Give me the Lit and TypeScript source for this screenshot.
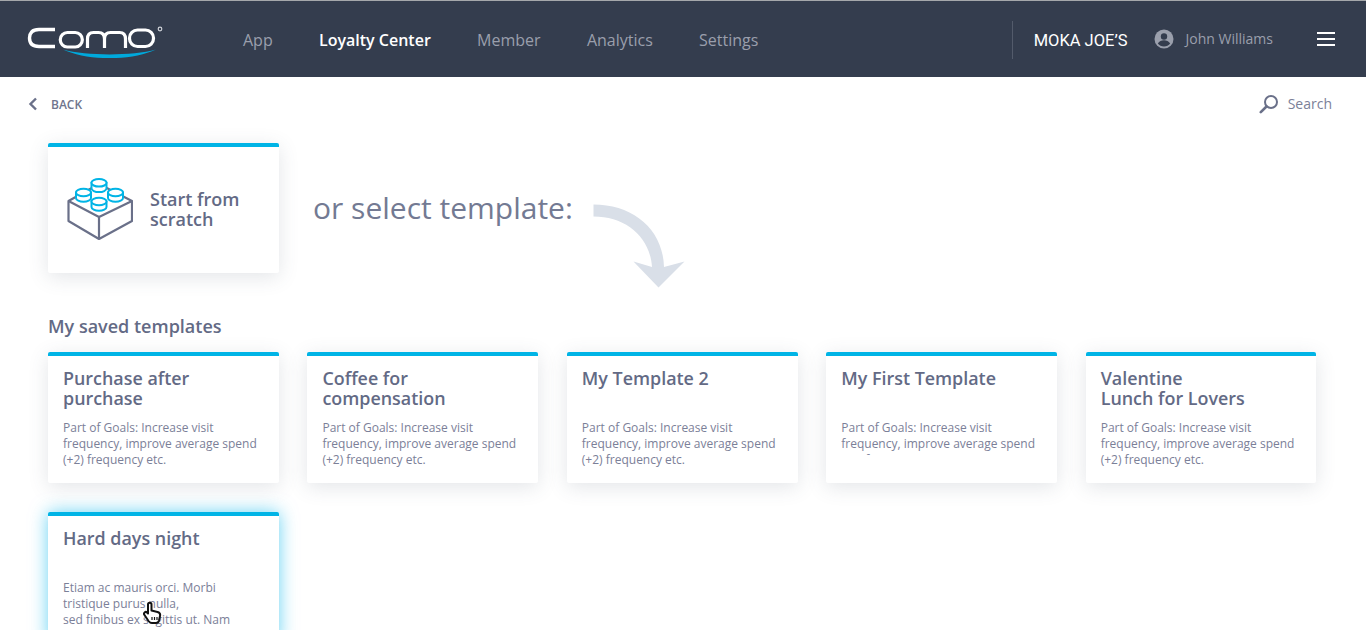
import { LitElement, html, css, svg } from "lit";
import { customElement } from "lit/decorators.js";

const saved = [
  { t: "Purchase after purchase", d: "Part of Goals: Increase visit frequency, improve average spend (+2) frequency etc." },
  { t: "Coffee for compensation", d: "Part of Goals: Increase visit frequency, improve average spend (+2) frequency etc." },
  { t: "My Template 2", d: "Part of Goals: Increase visit frequency, improve average spend (+2) frequency etc." },
  { t: "My First Template", d: "Part of Goals: Increase visit frequency, improve average spend (+2) frequency etc.", clip: true },
  { t: html`Valentine<br />Lunch for Lovers`, d: "Part of Goals: Increase visit frequency, improve average spend (+2) frequency etc." },
];

const stud = (x: number, y: number) => svg`
  <path d="M${x - 7.5} ${y}v5.500c0 2.200 3.500 3.800 7.500 3.800s7.500-1.600 7.500-3.800v-5.500z" fill="#fff" />
  <ellipse cx=${x} cy=${y} rx="7.500" ry="3.800" fill="#fff" />`;

@customElement("app-root")
export class AppRoot extends LitElement {
  static styles = css`
    :host { display: block; height: 630px; overflow: hidden; background: #fff; font-family: "Open Sans", sans-serif; color: #636a85; }
    .bar { height: 76px; border-top: 1px solid #a5a8ab; background: #343d4e; display: flex; align-items: center; }
    .logo { margin-left: 27px; width: 138px; height: 38px; flex: none; }
    nav { display: flex; gap: 46.3px; margin-left: 78px; font-size: 16px; color: #9a9fac; position: relative; top: 1px; }
    nav .on { color: #fff; font-weight: 600; }
    .right { margin-left: auto; display: flex; align-items: center; height: 38px; }
    .sep { width: 1px; height: 38px; background: #535b6b; margin-right: 21px; position: relative; top: 1px; }
    .org { font: 16.5px Roboto, sans-serif; color: #fff; margin-right: 26px; position: relative; top: 1px; }
    .avatar { width: 20px; height: 20px; margin-right: 12px; margin-top: -1px; }
    .user { font-size: 14px; color: #9a9fac; margin-right: 44px; margin-top: -1px; }
    .burger { width: 18px; height: 14px; margin-right: 31px; display: flex; flex-direction: column; justify-content: space-between; }
    .burger i { display: block; height: 2.4px; background: #fff; }
    .sub { height: 54px; display: flex; align-items: center; justify-content: space-between; padding: 0 34px 0 28px; }
    .back { display: flex; align-items: center; gap: 13px; font-size: 12px; font-weight: 600; color: #6f758d; }
    .search { display: flex; align-items: center; gap: 9px; font-size: 14px; line-height: 18px; color: #7b8098; }
    main { padding: 12px 49.5px 0 48px; }
    .top { display: flex; height: 130px; }
    .card { background: #fff; border-top: 4px solid #00b4e6; border-radius: 2px; box-shadow: 0 4px 20px rgba(70, 80, 100, .15); box-sizing: border-box; }
    .scratch { width: 231px; display: flex; align-items: center; gap: 17px; padding: 0 0 2px 19px; }
    .scratch svg { flex: none; }
    .scratch b { font-size: 18px; line-height: 20px; font-weight: 600; width: 95px; }
    .or { font-size: 30px; margin: 43px 0 0 34px; color: #737a93; line-height: 44px; white-space: nowrap; }
    .arrow { width: 92px; height: 84px; margin: 60.5px 0 0 20px; flex: none; }
    h2 { font-size: 18px; font-weight: 600; line-height: 24px; margin: 41px 0 14px; }
    .grid { display: grid; grid-template-columns: repeat(5, 1fr); column-gap: 28.6px; row-gap: 29px; }
    .tpl { height: 131px; padding: 12px 15px 0; position: relative; }
    .tpl h3 { margin: 0; font-size: 17.9px; line-height: 20px; font-weight: 600; height: 52px; }
    .tpl p { margin: 0; font-size: 12px; line-height: 16.2px; color: #7b8098; }
    .tpl p.clip { height: 35px; overflow: hidden; }
    .glow { box-shadow: 0 0 18px rgba(0, 180, 235, .6); }
    .hand { position: absolute; left: 95px; top: 85px; width: 20px; height: 24px; }
  `;

  render() {
    return html`
      <header class="bar">
        <svg class="logo" viewBox="0 0 138 38" fill="none" stroke="#fff" stroke-width="3.200" aria-label="Como logo">
          <path d="M28 9.500H12C5 9.500 2.500 13 2.500 18S5 26.500 12 26.500H28" stroke-width="3.400" />
          <rect x="33.300" y="12.500" width="22" height="14.500" rx="7" />
          <path d="M60.500 28V19c0-4 2-6.500 6-6.500h5c4 0 6 2.500 6 6.500v9M77.500 19c0-4 2-6.500 6-6.500h9c4 0 6 2.500 6 6.500v9" />
          <rect x="102.500" y="10" width="24" height="16.500" rx="8" />
          <path d="M36 29.500C60 36 105 36 129 29.500C105 41 60 41 36 29.500Z" fill="#00a9dc" stroke="none" />
          <circle cx="133" cy="9" r="1.800" stroke="#cfd2d8" stroke-width="1.200" />
        </svg>
        <nav>
          <span>App</span><span class="on">Loyalty Center</span><span>Member</span><span>Analytics</span><span>Settings</span>
        </nav>
        <div class="right">
          <div class="sep"></div>
          <span class="org">MOKA JOE’S</span>
          <svg class="avatar" viewBox="0 0 20 20">
            <circle cx="10" cy="10" r="9.500" fill="#9a9fac" />
            <circle cx="10" cy="7.500" r="3.200" fill="#343d4e" />
            <path d="M3.800 14.500c1.500-2.500 3.700-3.200 6.200-3.200s4.700.7 6.200 3.200c-1.500 2-3.700 3-6.200 3s-4.700-1-6.200-3z" fill="#343d4e" />
          </svg>
          <span class="user">John Williams</span>
          <div class="burger"><i></i><i></i><i></i></div>
        </div>
      </header>
      <div class="sub">
        <span class="back">
          <svg width="10" height="14" viewBox="0 0 10 14" fill="none" stroke="#6a7089" stroke-width="2.400"><path d="M8 1.500 2.500 7 8 12.500" /></svg>
          BACK
        </span>
        <span class="search">
          <svg width="20" height="20" viewBox="0 0 20 20" fill="none" stroke="#6a7089"><circle cx="12" cy="8" r="6" stroke-width="2" /><path d="M7.500 12.500 1.800 18.200" stroke-width="2.600" stroke-linecap="round" /></svg>
          <span>Search</span>
        </span>
      </div>
      <main>
        <div class="top">
          <div class="card scratch">
            <svg width="66" height="63" viewBox="0 0 66 63" fill="none">
              <g stroke="#6a7089" stroke-linejoin="round" stroke-width="2.200">
                <path d="M32 6 65 23V43L32 61 1.500 43V23Z" />
                <path d="M1.500 23 32 39 65 23M32 39V61" />
              </g>
              <g stroke="#00b4e6" stroke-width="2">
                ${stud(32, 4.8)}${stud(16.5, 14.5)}${stud(48.5, 14.5)}${stud(32, 23.5)}
              </g>
            </svg>
            <b>Start from scratch</b>
          </div>
          <div class="or">or select template:</div>
          <svg class="arrow" viewBox="0 0 92 84" fill="#d9dfe8">
            <path d="M.5 .5C40 .5 70 25 71 63L91.500 57.500 65.500 83.500 40.500 57.500 59 63C57 33 33 12.500 .5 12.500Z" />
          </svg>
        </div>
        <h2>My saved templates</h2>
        <div class="grid">
          ${saved.map(
            (c) => html`<div class="card tpl"><h3>${c.t}</h3><p class=${c.clip ? "clip" : ""}>${c.d}</p></div>`
          )}
          <div class="card tpl glow">
            <h3>Hard days night</h3>
            <p>Etiam ac mauris orci. Morbi tristique purus nulla,<br />sed finibus ex sagittis ut. Nam</p>
            <svg class="hand" viewBox="0 0 20 24">
              <path d="M5 3.500c0-2.500 3.500-2.500 3.500 0v6l6 1.500c2.500.7 3 2 2.500 4l-1 4.500c-.4 1.500-1.500 2.500-3 2.500H9c-1.500 0-2.500-.7-3.500-2L1.500 14c-1.500-2 1-4 2.500-2.500l1 1Z" fill="#fff" stroke="#111" stroke-width="2" stroke-linejoin="round" />
              <path d="M9 16v3M11.500 16v3M14 16v3" stroke="#111" stroke-width="1.200" />
            </svg>
          </div>
        </div>
      </main>`;
  }
}
